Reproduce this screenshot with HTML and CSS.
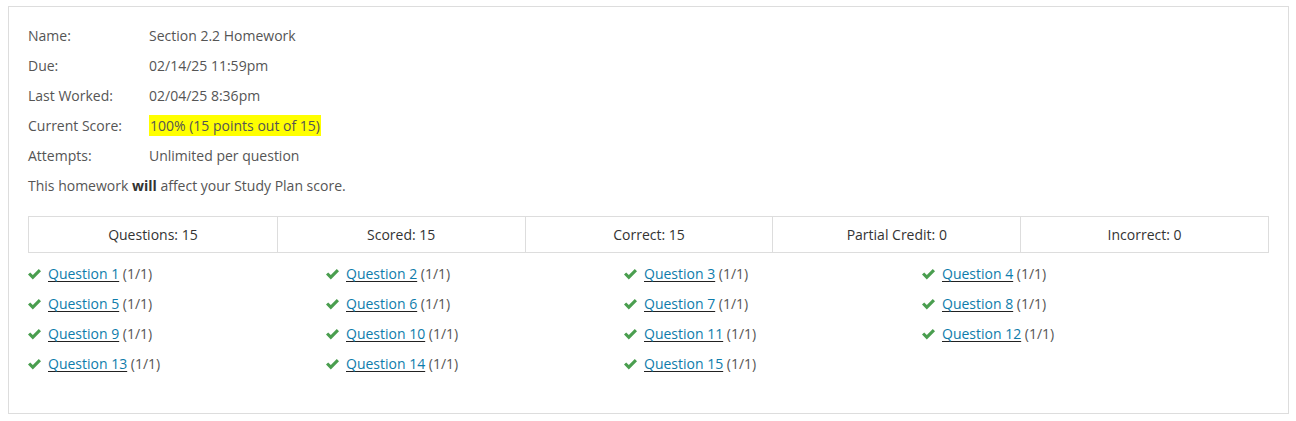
FILE: index.html
```html
<!DOCTYPE html>
<html>
<head>
<meta charset="utf-8">
<link rel="stylesheet" href="styles.css">
</head>
<body>
<div class="panel">
  <div class="info">
    <div class="row"><span class="label">Name:</span><span class="value">Section 2.2 Homework</span></div>
    <div class="row"><span class="label">Due:</span><span class="value">02/14/25 11:59pm</span></div>
    <div class="row"><span class="label">Last Worked:</span><span class="value">02/04/25 8:36pm</span></div>
    <div class="row"><span class="label">Current Score:</span><span class="value"><span class="hl">100% (15 points out of 15)</span></span></div>
    <div class="row"><span class="label">Attempts:</span><span class="value">Unlimited per question</span></div>
    <div class="row">This homework <b>will</b> affect your Study Plan score.</div>
  </div>
  <div class="summary">
    <div class="cell">Questions: 15</div>
    <div class="cell">Scored: 15</div>
    <div class="cell">Correct: 15</div>
    <div class="cell">Partial Credit: 0</div>
    <div class="cell">Incorrect: 0</div>
  </div>
  <div class="qgrid">
    <div class="q"><svg class="chk" viewBox="0 0 13 12"><path d="M0 6.6 L2.2 4.4 L4.8 7 L10.8 1 L13 3.2 L4.8 11.4 Z"/></svg><a href="#">Question 1</a> (1/1)</div>
    <div class="q"><svg class="chk" viewBox="0 0 13 12"><path d="M0 6.6 L2.2 4.4 L4.8 7 L10.8 1 L13 3.2 L4.8 11.4 Z"/></svg><a href="#">Question 2</a> (1/1)</div>
    <div class="q"><svg class="chk" viewBox="0 0 13 12"><path d="M0 6.6 L2.2 4.4 L4.8 7 L10.8 1 L13 3.2 L4.8 11.4 Z"/></svg><a href="#">Question 3</a> (1/1)</div>
    <div class="q"><svg class="chk" viewBox="0 0 13 12"><path d="M0 6.6 L2.2 4.4 L4.8 7 L10.8 1 L13 3.2 L4.8 11.4 Z"/></svg><a href="#">Question 4</a> (1/1)</div>
    <div class="q"><svg class="chk" viewBox="0 0 13 12"><path d="M0 6.6 L2.2 4.4 L4.8 7 L10.8 1 L13 3.2 L4.8 11.4 Z"/></svg><a href="#">Question 5</a> (1/1)</div>
    <div class="q"><svg class="chk" viewBox="0 0 13 12"><path d="M0 6.6 L2.2 4.4 L4.8 7 L10.8 1 L13 3.2 L4.8 11.4 Z"/></svg><a href="#">Question 6</a> (1/1)</div>
    <div class="q"><svg class="chk" viewBox="0 0 13 12"><path d="M0 6.6 L2.2 4.4 L4.8 7 L10.8 1 L13 3.2 L4.8 11.4 Z"/></svg><a href="#">Question 7</a> (1/1)</div>
    <div class="q"><svg class="chk" viewBox="0 0 13 12"><path d="M0 6.6 L2.2 4.4 L4.8 7 L10.8 1 L13 3.2 L4.8 11.4 Z"/></svg><a href="#">Question 8</a> (1/1)</div>
    <div class="q"><svg class="chk" viewBox="0 0 13 12"><path d="M0 6.6 L2.2 4.4 L4.8 7 L10.8 1 L13 3.2 L4.8 11.4 Z"/></svg><a href="#">Question 9</a> (1/1)</div>
    <div class="q"><svg class="chk" viewBox="0 0 13 12"><path d="M0 6.6 L2.2 4.4 L4.8 7 L10.8 1 L13 3.2 L4.8 11.4 Z"/></svg><a href="#">Question 10</a> (1/1)</div>
    <div class="q"><svg class="chk" viewBox="0 0 13 12"><path d="M0 6.6 L2.2 4.4 L4.8 7 L10.8 1 L13 3.2 L4.8 11.4 Z"/></svg><a href="#">Question 11</a> (1/1)</div>
    <div class="q"><svg class="chk" viewBox="0 0 13 12"><path d="M0 6.6 L2.2 4.4 L4.8 7 L10.8 1 L13 3.2 L4.8 11.4 Z"/></svg><a href="#">Question 12</a> (1/1)</div>
    <div class="q"><svg class="chk" viewBox="0 0 13 12"><path d="M0 6.6 L2.2 4.4 L4.8 7 L10.8 1 L13 3.2 L4.8 11.4 Z"/></svg><a href="#">Question 13</a> (1/1)</div>
    <div class="q"><svg class="chk" viewBox="0 0 13 12"><path d="M0 6.6 L2.2 4.4 L4.8 7 L10.8 1 L13 3.2 L4.8 11.4 Z"/></svg><a href="#">Question 14</a> (1/1)</div>
    <div class="q"><svg class="chk" viewBox="0 0 13 12"><path d="M0 6.6 L2.2 4.4 L4.8 7 L10.8 1 L13 3.2 L4.8 11.4 Z"/></svg><a href="#">Question 15</a> (1/1)</div>
  </div>
</div>
</body>
</html>
```

FILE: styles.css
```css
html, body {
  margin: 0;
  padding: 0;
  background: #fff;
}
body {
  padding: 6px 8px 0 8px;
  font-family: "Open Sans", "Liberation Sans", sans-serif;
  font-size: 14px;
  color: #555;
}
.panel {
  border: 1px solid #ddd;
  width: 1281px;
  height: 408px;
  box-sizing: border-box;
  padding: 14px 19px 0 19px;
}
.info {
  display: flex;
  flex-direction: column;
}
.row {
  height: 30px;
  line-height: 30px;
  display: flex;
  white-space: pre;
}
.row b {
  color: #333;
}
.label {
  width: 121px;
}
.hl {
  background: #ffff00;
  padding: 1px 1px;
}
.summary {
  margin-top: 15px;
  display: grid;
  grid-template-columns: repeat(5, 1fr);
  border: 1px solid #ddd;
  height: 37px;
  box-sizing: border-box;
}
.cell {
  border-left: 1px solid #ddd;
  text-align: center;
  line-height: 35px;
  color: #333;
}
.cell:first-child {
  border-left: none;
}
.qgrid {
  margin-top: 6px;
  display: grid;
  grid-template-columns: repeat(4, 298px);
}
.q {
  height: 30px;
  line-height: 30px;
  display: flex;
  align-items: center;
  white-space: pre;
}
.chk {
  width: 13px;
  height: 12px;
  fill: #4a9e4f;
  margin-right: 7px;
  margin-top: -1px;
}
.q a {
  color: #0e7cab;
  text-decoration: underline;
  text-decoration-color: #222;
  text-underline-offset: 2px;
}
```
